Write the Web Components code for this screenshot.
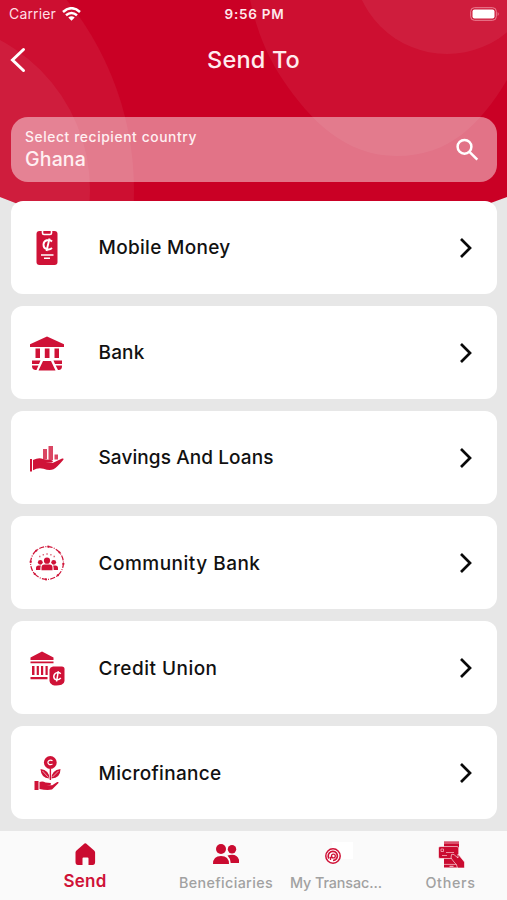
<!DOCTYPE html>
<html lang="en"><head><meta charset="utf-8"><title>Send To</title>
<style>html,body{margin:0;height:100%;overflow:hidden}body{font-family:Inter,"Liberation Sans",sans-serif;background:#e8e8e8}</style></head>
<body><send-page></send-page>
<script>
const define=(name,html,setup)=>customElements.define(name,class extends HTMLElement{
  connectedCallback(){if(!this.shadowRoot){this.attachShadow({mode:'open'}).innerHTML=typeof html==='function'?html(this):html;if(setup)setup(this)}}
});

/* Line of text whose tracking is adjusted to a given width */
define('fit-text','<style>:host{display:block;white-space:nowrap;width:max-content}span{display:inline-block}</style><span><slot></slot></span>',el=>{
  const s=el.shadowRoot.querySelector('span'),w=+el.getAttribute('width'),n=el.textContent.length;
  s.style.letterSpacing=((w-s.getBoundingClientRect().width)/n)+'px';
});

const icons={
mobile:`<rect x="7.500" y="1" width="21" height="34" rx="3"/><path d="M13.500 1v2q0 1.500 1.500 1.500h6q1.500 0 1.500-1.500V1" fill="none" stroke="#fff" stroke-width="1.600"/><path d="M23 11.500c-2.500-2.600-8.500-1.700-8.500 3.200s5.500 6 8.500 3.300M20.500 8.500 17.500 21" fill="none" stroke="#fff" stroke-width="1.900"/><path d="M12 25h12.500M15 28.200h6" stroke="#fff" stroke-width="1.600"/>`,
bank:`<path d="M18 1.500 35 9.300V12H1V9.300Z"/><path d="M6.500 13.500h4.500v9.500h-4.500zM15.800 13.500h4.700v9.500h-4.700zM25.500 13.500h4.500v9.500h-4.500z"/><path d="M3 25.500h8.500L10 29H3zM24.500 25.500H33V29h-7zM3 30.500h6.500L7.500 35C4.500 35 3 34 3 30.500ZM26.700 30.500H33C33 34 32 35 29 35ZM14 26h8l4.500 9.500H9.500Z"/>`,
savings:`<path d="M14 9h4v10h-4zM19.500 6h4.500v14h-4.500zM25.500 14.500h3.500v5h-3.500z" opacity=".78"/><path d="M1 19h2v12.500H1zM4 20q6-3 10-1l9 1.200q2 1.600-.4 2.300l-6 .2 7 .3 9.500-4.500q2-.4 1.300 1.200Q28 27.300 24.500 29.300 20.500 31 14.500 28.800 9 27.300 4 30.300Z"/>`,
community:`<circle cx="18" cy="18" r="16.400" fill="none" stroke="#cf1237" stroke-width="1.200" stroke-dasharray="5 1.300 1 1.300"/><g fill="none" stroke="#cf1237" stroke-width="2" stroke-dasharray="1.800 11.080"><circle cx="18" cy="18" r="16.400"/></g><circle cx="18" cy="15.700" r="3.100"/><circle cx="11.300" cy="17.300" r="2.400"/><circle cx="24.700" cy="17.300" r="2.400"/><path d="M12.500 25.300v-2.800q0-3 3-3h5q3 0 3 3v2.800zM7 25v-2q0-2.500 2.500-2.500h2.400q-.6 1.200-.6 4.500zM29 25v-2q0-2.500-2.500-2.500h-2.400q.6 1.200.6 4.500z"/><path d="M10 11.500h1.500M13.600 9.700h1.400M17.300 9h1.500M21.200 9.700h1.400M24.500 11.500H26" stroke="#df6c80" stroke-width="1.600"/>`,
credit:`<path d="M13 1.500 24.500 7.500V10h-23V7.500ZM1.500 11.500h23v1.700h-23zM3 16h2.500v9H3zM7.700 16h2.200v9H7.700zM12 16h2.200v9H12zM16.500 16h2.200v9h-2.200zM1.500 27h17v2.200h-17z"/><path d="M24 16.500h8q4-.5 3.500 3.500V31q0 2.500-3 3.700-5 1.500-9 .2-3-1.400-3-4V19.500q.5-2.500 3.500-3Z"/><g transform="translate(28 26)"><path d="M3.800-2.300C1-4.700-3.200-3.200-3.200.6S1.300 4.800 3.800 2M1.300-4.800-.4 5.500" fill="none" stroke="#fff" stroke-width="1.500"/></g>`,
micro:`<circle cx="21.300" cy="7.500" r="6.400"/><path d="M23.500 5.700q-2-1.400-3.700.1t-.1 3.200q1.500 1.400 3.800.1" fill="none" stroke="#fff" stroke-width="1.200"/><path d="M20.700 14h1.400v11h-1.400z"/><path d="M20.300 23.500Q12 23 11.500 14q9 1 8.800 9.500ZM22.500 23.500Q22.500 15 31.500 14 31.500 23 22.500 23.500Z"/><path d="m13.500 16 6 6.500M29.500 16l-6 6" stroke="#fff" stroke-width=".6"/><path d="M5.500 26h4v9h-4zM10.500 27q3-1.400 6 .5l5 .4q1.500 1-.3 2l-4 .4h6l5-3.300q1.800-.3 1.300 1L23 34.500q-5 1-12.500-.5Z"/>`
};
define('service-icon',el=>`<style>:host,svg{display:block}:host{width:36px;height:36px}svg{fill:#cf1237}</style><svg width="36" height="36" viewBox="0 0 36 36">${icons[el.getAttribute('name')]}</svg>`);

define('service-row',el=>`<style>
:host{display:flex;box-sizing:border-box;height:92.700px;background:#fff;border-radius:12px;align-items:center;padding:.4px 24px 0 18px}
fit-text{margin-left:33.500px;padding-top:1.500px;flex:1;font-size:19px;font-weight:500;line-height:28px;color:#111}
.chevron{display:block}</style><service-icon name="${el.getAttribute('icon')}"></service-icon><fit-text width="${el.getAttribute('width')}">${el.getAttribute('label')}</fit-text>
<svg class="chevron" width="14" height="22" viewBox="0 0 14 22"><path d="m2 2 9 9-9 9" fill="none" stroke="#090909" stroke-width="2.700"/></svg>`);

define('status-bar',`<style>:host{display:grid;grid-template-columns:1fr auto 1fr;align-items:center;height:28px;padding:0 7px 0 9px;color:#fff;font-size:14px;line-height:20px}
.left{display:flex;align-items:center;gap:6px;color:#ffdfe4}.battery{justify-self:end}svg{display:block}.time{font-size:13.500px;font-weight:600;color:#ffe9ec}</style>
<div class="left"><fit-text width="47">Carrier</fit-text><svg width="19" height="14" viewBox="0 0 19 14"><g fill="none" stroke="#fff" stroke-width="2.500"><path d="M1 5Q9.500-2.600 18 5M4 8.300q5.500-4.700 11 0"/></g><path d="m6.300 10.600 3.200 3.100 3.200-3.100q-3.200-2.500-6.400 0Z" fill="#fff"/></svg></div>
<fit-text class="time" width="60">9:56 PM</fit-text>
<svg class="battery" width="30" height="14" viewBox="0 0 30 14"><rect x=".7" y=".7" width="25.600" height="12.600" rx="3.700" fill="none" stroke="#ec8295" stroke-width="1"/><rect x="2.500" y="2.500" width="22" height="9" rx="2" fill="#fff"/><path d="M27.700 5q2 2 0 4Z" fill="#ec8295"/></svg>`);

define('search-field',`<style>:host{display:flex;box-sizing:border-box;height:65px;border-radius:17px;background:rgba(255,255,255,.45);align-items:center;justify-content:space-between;padding:0 18px 0 14px;color:#fff0f2}
.label{font-size:13.800px;font-weight:500;line-height:19px}.value{font-size:19.500px;font-weight:500;line-height:25px}svg{display:block}</style>
<div><fit-text class="label" width="172">Select recipient country</fit-text><fit-text class="value" width="61">Ghana</fit-text></div>
<svg width="24" height="24" viewBox="0 0 24 24" fill="none" stroke="#fff" stroke-width="2.500"><circle cx="9.500" cy="8.800" r="6.900"/><path d="m14.500 13.800 7.800 7.800"/></svg>`);

define('send-header',`<style>:host{display:grid;height:201px;align-content:start}.art,.content{grid-area:1/1}.art{display:block;width:507px;height:215px}.content{width:507px}
.title{display:grid;grid-template-columns:1fr auto 1fr;align-items:center;height:64px;padding:0 10px 0 10px;color:#ffecef}.title fit-text{font-size:23.500px;font-weight:500;line-height:32px}.title svg{display:block}
search-field{margin:25px 10px 0 11px}</style>
<svg class="art" viewBox="0 0 507 215"><defs><clipPath id="edge"><path d="M0 0H507V197L488 204Q254 226 18 204L0 197Z"/></clipPath></defs><g clip-path="url(#edge)"><path d="M0 0h507v215H0Z" fill="#ca0025"/><g fill="#fff" fill-opacity=".06"><circle cx="-168" cy="190" r="302"/><circle cx="-80" cy="190" r="170"/><path d="M250 0C257 32 268 58 283 80 310 120 345 156 397 156S480 125 507 80V0Z"/><circle cx="447" cy="-40" r="94"/></g></g></svg>
<div class="content"><status-bar></status-bar><div class="title"><svg width="17" height="26" viewBox="0 0 17 26"><path d="M13.500 2.500 2.500 13l11 10.500" fill="none" stroke="#fff" stroke-width="3" stroke-linecap="round"/></svg><fit-text width="93">Send To</fit-text></div><search-field></search-field></div>`);

const tabIcons={
home:'<path d="M16.500 1.500q.8-.6 1.600 0l8 7q1 .9 1 2V20q0 3-2.500 3h-4.100v-6.500q0-1-1-1h-4q-1 0-1 1V23H10Q7.500 23 7.500 20v-9.500q0-1.100 1-2Z"/>',
people:'<circle cx="12" cy="7" r="5"/><circle cx="23" cy="7.300" r="4.200"/><path d="M4 22q0-8 8-8t8 8ZM18.500 13.500q9-2.800 11.500 4.300V21h-8.300q-.4-5-3.200-7.500Z"/>',
target:'<path d="M13 0h21v17H13Z" fill="#fff"/><circle cx="14" cy="14" r="7.200" fill="#fff" stroke="#cf1237" stroke-width="1.500"/><path d="M10 16.500a4.600 4.600 0 1 1 4 2" fill="none" stroke="#cf1237" stroke-width="1.700"/><circle cx="14.400" cy="14" r="1.900" fill="none" stroke="#cf1237" stroke-width="1.300"/><path d="M11.500 18v-2.500h2" fill="none" stroke="#cf1237" stroke-width="1.300"/>',
pay:'<path d="M10-.5h15v26H10Z"/><path d="M10 1h15M10 22.400h13" stroke="#f6bcc5" stroke-width=".8"/><rect x="4.500" y="4.500" width="20" height="12" rx="1.500" stroke="#fff" stroke-width=".6"/><path d="M7 7h2.500v2.500H7zM12 10.500h8M8 13.500h5" fill="none" stroke="#f5b0bd" stroke-width=".8"/><path d="M17.500 12.500q1.500-.8 3 .5l3.500 3v-4l6.500 8v6h-7q-.5-4-3.500-6l-3-4Z" stroke="#fff" stroke-width=".6"/><path d="M15.500 24.300h4" stroke="#fff" stroke-width=".8"/>'
};
define('tab-item',el=>`<style>:host{display:flex;flex-direction:column;align-items:center;color:#a1a1a1;font-size:14.300px;font-weight:500;line-height:20px;padding-top:11px;box-sizing:border-box}:host([active]){color:#cf1237;font-size:17px;font-weight:600}svg{display:block;fill:#ca0b30;overflow:visible}fit-text{margin-top:6px}:host([active]) fit-text{margin-top:4px}</style><svg width="34" height="25" viewBox="0 0 34 25">${tabIcons[el.getAttribute('icon')]}</svg><fit-text width="${el.getAttribute('width')}">${el.getAttribute('label')}</fit-text>`);
define('tab-bar','<style>:host{display:grid;grid-template-columns:170px 112px 108px 117px;background:#fafafa;height:69.500px}::slotted(:last-child){margin-left:4px}</style><slot></slot>');
define('send-page',`<style>:host{display:flex;flex-direction:column;width:507px;height:900px;background:#e7e7e7}.list{position:relative;display:grid;gap:12.400px;padding:0 10px 0 11px}tab-bar{margin-top:auto}</style>
<send-header></send-header><main class="list">
<service-row icon="mobile" label="Mobile Money" width="132"></service-row><service-row icon="bank" label="Bank" width="46"></service-row><service-row icon="savings" label="Savings And Loans" width="175"></service-row><service-row icon="community" label="Community Bank" width="162"></service-row><service-row icon="credit" label="Credit Union" width="119"></service-row><service-row icon="micro" label="Microfinance" width="123"></service-row></main>
<tab-bar><tab-item active icon="home" label="Send" width="43"></tab-item><tab-item icon="people" label="Beneficiaries" width="94"></tab-item><tab-item icon="target" label="My Transac..." width="92"></tab-item><tab-item icon="pay" label="Others" width="50"></tab-item></tab-bar>`);
</script></body></html>
